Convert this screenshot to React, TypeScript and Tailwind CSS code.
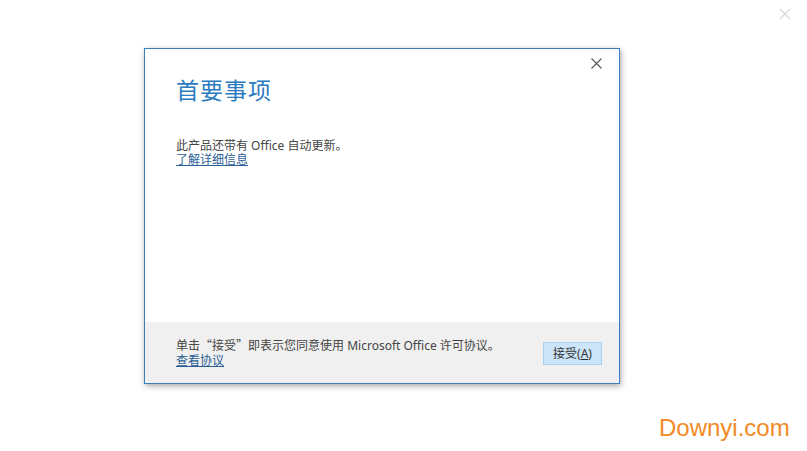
import React from "react";

const font = { fontFamily: '"Noto Sans", "Noto Sans CJK SC", sans-serif' };
const cjk = { fontFamily: '"Noto Sans CJK SC", sans-serif' };

export default function App() {
  return (
    <div className="relative w-[807px] h-[451px] bg-white overflow-hidden" style={font}>
      <div className="absolute right-[16px] top-[8px] text-[#d6d6d6]">
        <svg width="12" height="12" viewBox="0 0 12 12">
          <path d="M1 1L11 11M11 1L1 11" stroke="currentColor" strokeWidth="1.2" />
        </svg>
      </div>
      <div className="pt-[48px] pl-[144px]">
        <div className="w-[476px] h-[336px] border border-[#3a7fba] bg-white flex flex-col shadow-[1px_2px_6px_rgba(0,0,0,0.35)]">
          <div className="flex-1 relative pl-[31px] pt-[26px]">
            <button className="absolute right-[17px] top-[9px] text-[#555]">
              <svg width="11" height="11" viewBox="0 0 11 11">
                <path d="M0.5 0.5L10.5 10.5M10.5 0.5L0.5 10.5" stroke="currentColor" strokeWidth="1.1" />
              </svg>
            </button>
            <h1 className="text-[23px] leading-[30px] text-[#2b7bc0] tracking-[1px]">首要事项</h1>
            <p className="mt-[34px] text-[12px] leading-[14px] text-[#444]">此产品还带有 Office 自动更新。</p>
            <a className="block text-[12px] leading-[14px] text-[#2a5e96] underline">了解详细信息</a>
          </div>
          <div className="h-[61px] bg-[#f0f0f0] flex items-center pl-[31px] pr-[17px]">
            <div className="flex-1 text-[12px] leading-[15px] text-[#444]">
              <p>
                单击<span style={cjk}>“</span>接受<span style={cjk}>”</span>即表示您同意使用 Microsoft Office 许可协议。
              </p>
              <a className="block text-[#2a5e96] underline">查看协议</a>
            </div>
            <button className="w-[59px] h-[23px] mt-[2px] bg-[#cce4f7] border border-[#a8d0f0] text-[12px] text-[#333] leading-none">
              接受(<span className="underline">A</span>)
            </button>
          </div>
        </div>
      </div>
      <div className="absolute left-[659px] top-[410px] text-[24px] text-[#f08a24]" style={{ fontFamily: '"Liberation Sans", Arial, sans-serif' }}>
        Downyi.com
      </div>
    </div>
  );
}
